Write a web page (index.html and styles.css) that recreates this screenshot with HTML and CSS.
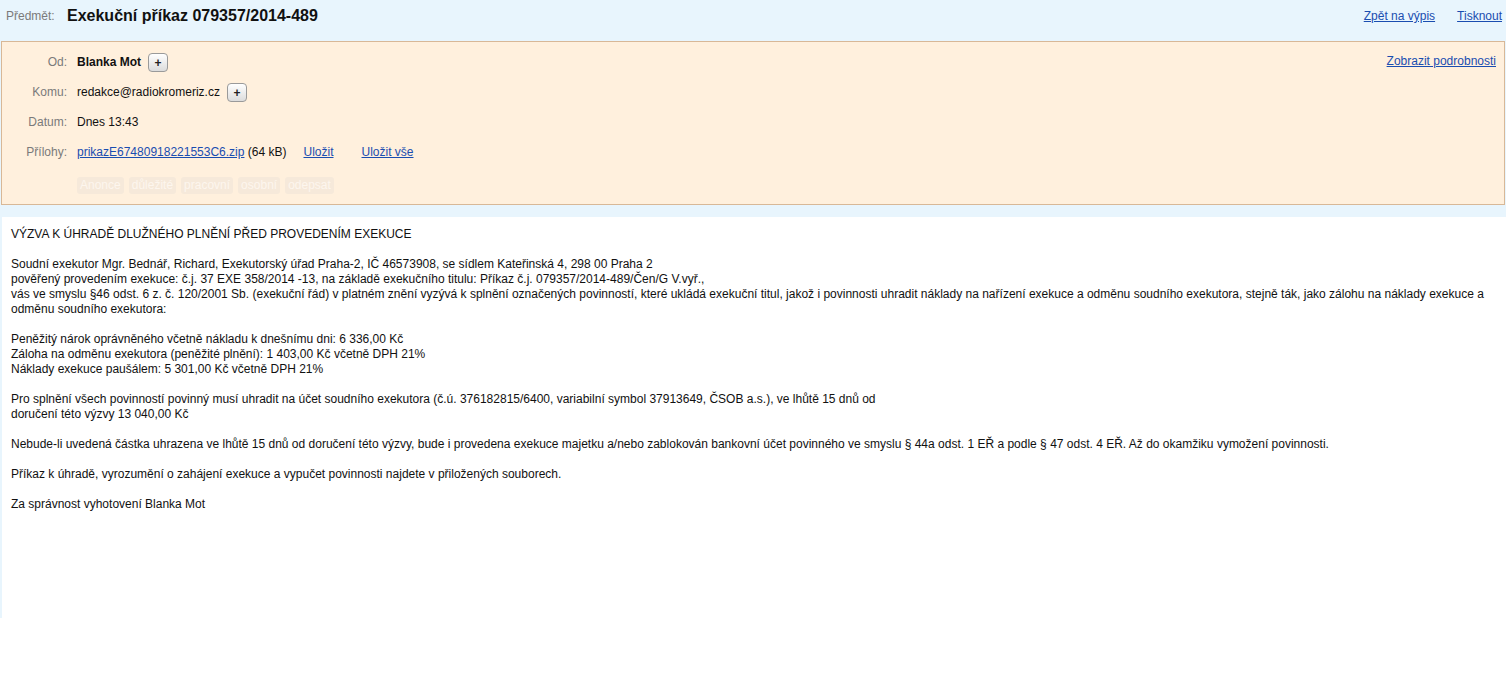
FILE: index.html
```html
<!DOCTYPE html>
<html lang="cs">
<head>
  <meta charset="UTF-8" />
  <meta name="viewport" content="width=device-width, initial-scale=1.0">
  <title>Exekuční příkaz 079357/2014-489</title>
  <link rel="stylesheet" href="styles.css">
</head>
<body>

  <div class="mailview">
    <div class="subject-bar">
      <span class="label">Předmět:</span>
      <h1 class="subject">Exekuční příkaz 079357/2014-489</h1>
      <div class="actions">
        <a href="#">Zpět na výpis</a>
        <a href="#">Tisknout</a>
      </div>
    </div>

    <div class="headers">
      <a href="#" class="details">Zobrazit podrobnosti</a>

      <div class="row">
        <span class="hlabel">Od:</span>
        <span class="value"><b>Blanka Mot</b><button class="plus">+</button></span>
      </div>
      <div class="row">
        <span class="hlabel">Komu:</span>
        <span class="value">redakce@radiokromeriz.cz<button class="plus">+</button></span>
      </div>
      <div class="row">
        <span class="hlabel">Datum:</span>
        <span class="value">Dnes 13:43</span>
      </div>
      <div class="row">
        <span class="hlabel">Přílohy:</span>
        <span class="value"><a href="#">prikazE67480918221553C6.zip</a> (64 kB)<a href="#" class="save">Uložit</a><a href="#" class="save-all">Uložit vše</a></span>
      </div>

      <div class="tags">
        <span class="tag">Anonce</span>
        <span class="tag">důležité</span>
        <span class="tag">pracovní</span>
        <span class="tag">osobní</span>
        <span class="tag">odepsat</span>
      </div>
    </div>

    <div class="message">
      <p>VÝZVA K ÚHRADĚ DLUŽNÉHO PLNĚNÍ PŘED PROVEDENÍM EXEKUCE</p>
      <p>Soudní exekutor Mgr. Bednář, Richard, Exekutorský úřad Praha-2, IČ 46573908, se sídlem Kateřinská 4, 298 00 Praha 2<br>
      pověřený provedením exekuce: č.j. 37 EXE 358/2014 -13, na základě exekučního titulu: Příkaz č.j. 079357/2014-489/Čen/G V.vyř.,<br>
      vás ve smyslu §46 odst. 6 z. č. 120/2001 Sb. (exekuční řád) v platném znění vyzývá k splnění označených povinností, které ukládá exekuční titul, jakož i povinnosti uhradit náklady na nařízení exekuce a odměnu soudního exekutora, stejně ták, jako zálohu na náklady exekuce a odměnu soudního exekutora:</p>
      <p>Peněžitý nárok oprávněného včetně nákladu k dnešnímu dni: 6 336,00 Kč<br>
      Záloha na odměnu exekutora (peněžité plnění): 1 403,00 Kč včetně DPH 21%<br>
      Náklady exekuce paušálem: 5 301,00 Kč včetně DPH 21%</p>
      <p>Pro splnění všech povinností povinný musí uhradit na účet soudního exekutora (č.ú. 376182815/6400, variabilní symbol 37913649, ČSOB a.s.), ve lhůtě 15 dnů od<br>
      doručení této výzvy 13 040,00 Kč</p>
      <p>Nebude-li uvedená částka uhrazena ve lhůtě 15 dnů od doručení této výzvy, bude i provedena exekuce majetku a/nebo zablokován bankovní účet povinného ve smyslu § 44a odst. 1 EŘ a podle § 47 odst. 4 EŘ. Až do okamžiku vymožení povinnosti.</p>
      <p>Příkaz k úhradě, vyrozumění o zahájení exekuce a vypučet povinnosti najdete v přiložených souborech.</p>
      <p>Za správnost vyhotovení Blanka Mot</p>
    </div>
  </div>

</body>
</html>
```

FILE: styles.css
```css
:root {
  --blue-bg: #e8f5fd;
  --head-bg: #fff0dd;
  --head-border: #d8b897;
  --link: #1a4db0;
  --label: #7a7a7a;
  --text: #111;
}

body {
  font-family: "Liberation Sans", Arial, sans-serif;
  font-size: 12px;
  color: var(--text);
  background: #fff;
  margin: 0;
  padding: 0;
}

a {
  color: var(--link);
  text-decoration: underline;
}

.mailview {
  background: var(--blue-bg);
}

/* subject bar */
.subject-bar {
  height: 41px;
  display: flex;
  align-items: flex-start;
  padding: 0 4px 0 6px;
  box-sizing: border-box;
}

.label {
  color: var(--label);
  line-height: 32px;
  width: 61px;
}

.subject {
  font-size: 16px;
  font-weight: bold;
  margin: 0;
  line-height: 32px;
  color: #111;
}

.actions {
  margin-left: auto;
  display: flex;
  gap: 22px;
  line-height: 32px;
}

/* header box */
.headers {
  position: relative;
  margin: 0 1px;
  background: var(--head-bg);
  border: 1px solid var(--head-border);
  padding: 5px 0 10px;
}

.details {
  position: absolute;
  top: 12px;
  right: 8px;
}

.row {
  display: flex;
  height: 30px;
  line-height: 30px;
}

.hlabel {
  width: 65px;
  text-align: right;
  color: var(--label);
  flex-shrink: 0;
}

.value {
  margin-left: 10px;
}

.value b {
  font-weight: bold;
}

.plus {
  width: 20px;
  height: 19px;
  margin-left: 7px;
  padding: 0;
  vertical-align: middle;
  border: 1px solid #9a9a9a;
  border-radius: 4px;
  background: linear-gradient(#ffffff, #dcdcdc);
  font-family: "Liberation Sans", Arial, sans-serif;
  font-size: 12px;
  font-weight: bold;
  line-height: 16px;
  color: #222;
}

.save {
  margin-left: 17px;
}

.save-all {
  margin-left: 28px;
}

.tags {
  display: flex;
  gap: 5px;
  margin: 10px 0 0 75px;
}

.tag {
  background: #f6e9da;
  color: #fdf6ee;
  border-radius: 3px;
  padding: 0 3px;
  height: 17px;
  line-height: 17px;
  font-size: 12px;
}

/* message body */
.message {
  background: #fff;
  margin: 12px 0 0 2px;
  padding: 10px 12px 10px 9px;
  min-height: 381px;
  line-height: 15px;
}

.message p {
  margin: 0 0 15px;
}
```
